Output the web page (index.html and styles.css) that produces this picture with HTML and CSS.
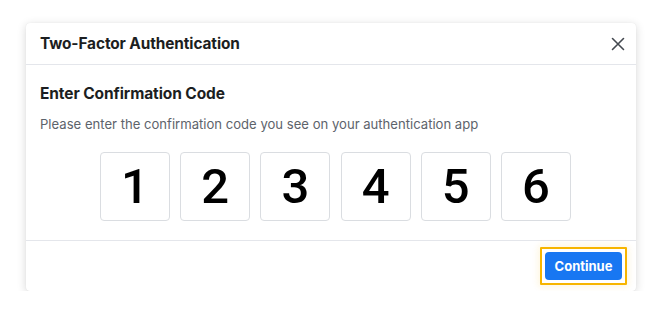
FILE: index.html
```html
<!DOCTYPE html>
<html>
<head>
<meta charset="utf-8">
<link rel="stylesheet" href="styles.css">
</head>
<body>
<div class="dialog">
  <div class="header">
    <div class="title">Two-Factor Authentication</div>
    <button class="close" aria-label="Close">
      <svg width="14" height="14" viewBox="0 0 14 14"><path d="M1.5 1.5 L12.5 12.5 M12.5 1.5 L1.5 12.5" stroke="#444950" stroke-width="1.6" stroke-linecap="round" fill="none"/></svg>
    </button>
  </div>
  <div class="body">
    <div class="heading">Enter Confirmation Code</div>
    <div class="desc">Please enter the confirmation code you see on your authentication app</div>
    <div class="codes">
      <div class="digit">1</div>
      <div class="digit">2</div>
      <div class="digit">3</div>
      <div class="digit">4</div>
      <div class="digit">5</div>
      <div class="digit">6</div>
    </div>
  </div>
  <div class="footer">
    <div class="focus-ring">
      <button class="continue">Continue</button>
    </div>
  </div>
</div>
</body>
</html>
```

FILE: styles.css
```css
html, body {
  margin: 0;
  padding: 0;
  background: #ffffff;
}
body {
  font-family: Inter, "Liberation Sans", Arial, sans-serif;
  color: #1c1e21;
  padding: 23px 0 0 26px;
}
.dialog {
  width: 610px;
  height: 268px;
  background: #fff;
  border-radius: 4px;
  box-shadow: 0 2px 10px rgba(0,0,0,0.16), 0 0 1px rgba(0,0,0,0.1);
  display: flex;
  flex-direction: column;
  box-sizing: border-box;
}
.header {
  height: 41px;
  display: flex;
  align-items: center;
  justify-content: space-between;
  padding: 0 10px 0 14px;
  border-bottom: 1px solid #e4e6eb;
  flex: none;
}
.title {
  font-size: 15.4px;
  font-weight: 700;
  letter-spacing: -0.1px;
  color: #1c1e21;
}
.close {
  border: 0;
  background: none;
  padding: 0;
  width: 16px;
  height: 16px;
  display: flex;
  align-items: center;
  justify-content: center;
}
.body {
  padding: 19px 14px 19px 14px;
  border-bottom: 1px solid #e4e6eb;
  flex: none;
}
.heading {
  font-size: 15.5px;
  font-weight: 700;
  line-height: 20px;
  letter-spacing: -0.1px;
}
.desc {
  margin-top: 11px;
  font-size: 13.1px;
  line-height: 18px;
  color: #5d636b;
}
.codes {
  margin-top: 19px;
  padding-left: 60px;
  display: flex;
  gap: 10.2px;
}
.digit {
  width: 70px;
  height: 69px;
  box-sizing: border-box;
  border: 1px solid #dadde1;
  border-radius: 4px;
  display: flex;
  align-items: center;
  justify-content: center;
  font-family: Roboto, "Liberation Sans", Arial, sans-serif;
  font-size: 49px;
  font-weight: 500;
  color: #000;
}
.footer {
  flex: 1;
  display: flex;
  align-items: center;
  justify-content: flex-end;
  padding: 0 9px 0 14px;
}
.focus-ring {
  border: 2px solid #f7b500;
  border-radius: 1px;
  padding: 3px;
  display: flex;
  box-shadow: 0 0 6px 2px rgba(247,181,0,0.12);
}
.continue {
  width: 77px;
  height: 28px;
  border: 0;
  border-radius: 4px;
  background: #1877f2;
  color: #fff;
  font-family: Inter, "Liberation Sans", Arial, sans-serif;
  font-size: 13px;
  font-weight: 700;
  padding: 0;
}
```
